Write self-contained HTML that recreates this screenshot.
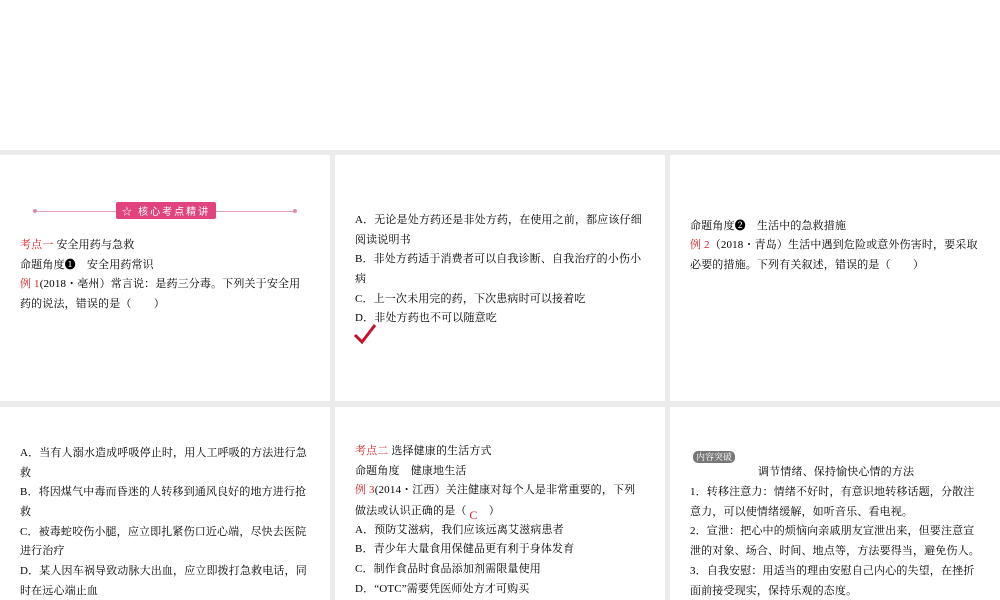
<!DOCTYPE html>
<html><head><meta charset="utf-8"><style>
body{margin:0;width:1000px;height:600px;background:#fff;position:relative;overflow:hidden;font-family:"Liberation Serif","Noto Serif CJK SC","Noto Sans CJK SC",serif;font-size:11px;color:#000}
.bg{position:absolute;left:0;top:150px;width:1000px;height:450px;background:#ebebeb}
.p{position:absolute;background:#fff}
.t{position:absolute;white-space:nowrap;line-height:14px;letter-spacing:0.15px}
.r{color:#d42020}
</style></head><body>
<div class="bg"></div>
<div class="p" style="left:0;top:155px;width:330px;height:246px"></div>
<div class="p" style="left:335px;top:155px;width:330px;height:246px"></div>
<div class="p" style="left:670px;top:155px;width:330px;height:246px"></div>
<div class="p" style="left:0;top:407px;width:330px;height:193px"></div>
<div class="p" style="left:335px;top:407px;width:330px;height:193px"></div>
<div class="p" style="left:670px;top:407px;width:330px;height:193px"></div>

<div style="position:absolute;left:34px;top:211px;width:262px;height:1px;background:#e8a0c0"></div>
<div style="position:absolute;left:33px;top:209px;width:4px;height:4px;border-radius:2px;background:#e48ab0"></div>
<div style="position:absolute;left:293px;top:209px;width:4px;height:4px;border-radius:2px;background:#e48ab0"></div>
<div style="position:absolute;left:116px;top:202px;width:100px;height:17px;background:#e0437e;color:#fff;font-size:10px;text-align:center;line-height:17px;letter-spacing:2px;font-family:'Noto Sans CJK SC',sans-serif;border-radius:2px">☆ 核心考点精讲 ☆</div>

<div class="t" style="left:20px;top:238px"><span class="r">考点一</span> 安全用药与急救</div>
<div class="t" style="left:20px;top:258px">命题角度❶　安全用药常识</div>
<div class="t" style="left:20px;top:277px"><span class="r">例 1</span>(2018・亳州）常言说：是药三分毒。下列关于安全用</div>
<div class="t" style="left:20px;top:297px">药的说法，错误的是（　　）</div>

<div class="t" style="left:355px;top:213px">A．无论是处方药还是非处方药，在使用之前，都应该仔细</div>
<div class="t" style="left:355px;top:233px">阅读说明书</div>
<div class="t" style="left:355px;top:252px">B．非处方药适于消费者可以自我诊断、自我治疗的小伤小</div>
<div class="t" style="left:355px;top:272px">病</div>
<div class="t" style="left:355px;top:292px">C．上一次未用完的药，下次患病时可以接着吃</div>
<div class="t" style="left:355px;top:311px">D．非处方药也不可以随意吃</div>
<svg style="position:absolute;left:353px;top:323px" width="24" height="22"><path d="M2 12 L9 19 L22 2" stroke="#c8102e" stroke-width="3" fill="none"/></svg>

<div class="t" style="left:690px;top:219px">命题角度❷　生活中的急救措施</div>
<div class="t" style="left:690px;top:238px"><span class="r">例 2</span>（2018・青岛）生活中遇到危险或意外伤害时，要采取</div>
<div class="t" style="left:690px;top:258px">必要的措施。下列有关叙述，错误的是（　　）</div>

<div class="t" style="left:20px;top:446px">A．当有人溺水造成呼吸停止时，用人工呼吸的方法进行急</div>
<div class="t" style="left:20px;top:466px">救</div>
<div class="t" style="left:20px;top:485px">B．将因煤气中毒而昏迷的人转移到通风良好的地方进行抢</div>
<div class="t" style="left:20px;top:505px">救</div>
<div class="t" style="left:20px;top:525px">C．被毒蛇咬伤小腿，应立即扎紧伤口近心端，尽快去医院</div>
<div class="t" style="left:20px;top:544px">进行治疗</div>
<div class="t" style="left:20px;top:564px">D．某人因车祸导致动脉大出血，应立即拨打急救电话，同</div>
<div class="t" style="left:20px;top:584px">时在远心端止血</div>

<div class="t" style="left:355px;top:444px"><span class="r">考点二</span> 选择健康的生活方式</div>
<div class="t" style="left:355px;top:464px">命题角度　健康地生活</div>
<div class="t" style="left:355px;top:483px"><span class="r">例 3</span>(2014・江西）关注健康对每个人是非常重要的，下列</div>
<div class="t" style="left:355px;top:503px">做法或认识正确的是（ <span class="r" style="font-size:12px;position:relative;top:5px">C</span>　）</div>
<div class="t" style="left:355px;top:523px">A．预防艾滋病，我们应该远离艾滋病患者</div>
<div class="t" style="left:355px;top:542px">B．青少年大量食用保健品更有利于身体发育</div>
<div class="t" style="left:355px;top:562px">C．制作食品时食品添加剂需限量使用</div>
<div class="t" style="left:355px;top:582px">D．“OTC”需要凭医师处方才可购买</div>

<div style="position:absolute;left:693px;top:451px;width:42px;height:12px;background:#777;border-radius:5px;color:#fff;font-size:9px;line-height:12px;text-align:center">内容突破</div>
<div class="t" style="left:758px;top:465px">调节情绪、保持愉快心情的方法</div>
<div class="t" style="left:690px;top:485px">1．转移注意力：情绪不好时，有意识地转移话题，分散注</div>
<div class="t" style="left:690px;top:505px">意力，可以使情绪缓解，如听音乐、看电视。</div>
<div class="t" style="left:690px;top:524px">2．宣泄：把心中的烦恼向亲戚朋友宣泄出来，但要注意宣</div>
<div class="t" style="left:690px;top:544px">泄的对象、场合、时间、地点等，方法要得当，避免伤人。</div>
<div class="t" style="left:690px;top:564px">3．自我安慰：用适当的理由安慰自己内心的失望，在挫折</div>
<div class="t" style="left:690px;top:584px">面前接受现实，保持乐观的态度。</div>
</body></html>
